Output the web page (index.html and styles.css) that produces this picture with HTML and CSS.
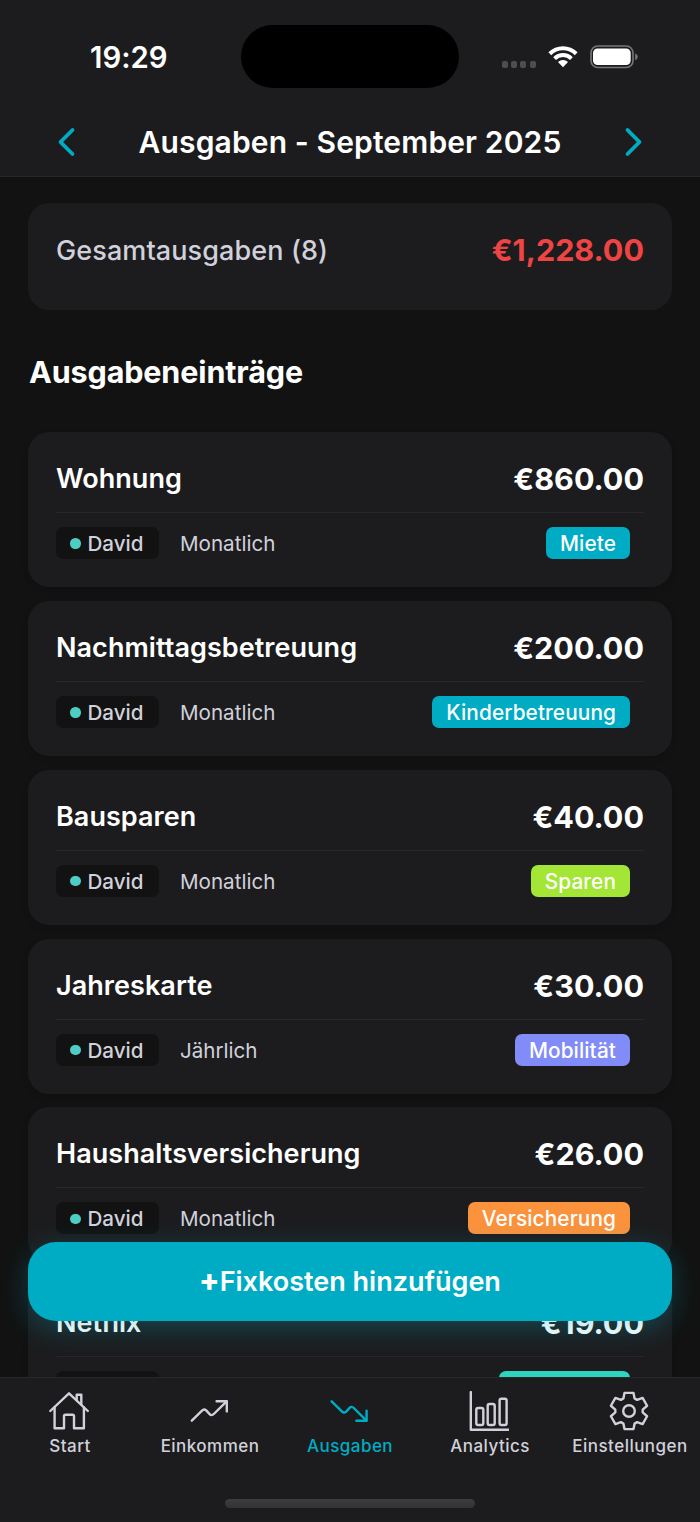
FILE: index.html
```html
<!DOCTYPE html>
<html lang="de">
<head>
	<meta charset="UTF-8">
	<title>Ausgaben</title>
	<link rel="stylesheet" href="styles.css">
</head>
<body>
	<div class="app">
		<header class="header">
			<div class="status">
				<div class="time">19:29</div>
				<div class="island"></div>
				<div class="signals">
					<div class="dots"><i></i><i></i><i></i><i></i></div>
					<svg class="wifi" width="30" height="22" viewBox="0 0 30 22">
						<path d="M0.4 6.3 A20.6 20.6 0 0 1 29.6 6.3 L26.8 9.2 A16.7 16.7 0 0 0 3.2 9.2 Z"/>
						<path d="M5.2 11.2 A13.8 13.8 0 0 1 24.8 11.2 L22 14 A9.9 9.9 0 0 0 8 14 Z"/>
						<path d="M10 16 A7.1 7.1 0 0 1 20 16 L15 21.3 Z"/>
					</svg>
					<svg class="battery" width="48" height="24" viewBox="0 0 48 24">
						<rect class="shell" x="1" y="1" width="42" height="21.5" rx="6.8"/>
						<rect x="3" y="3.4" width="37.7" height="16.6" rx="4.6"/>
						<path class="cap" d="M45.2 8.2 Q47.8 9.3 47.8 11.7 T45.2 15.2 Z"/>
					</svg>
				</div>
			</div>
			<div class="nav">
				<svg class="arrow" width="24" height="32" viewBox="0 0 24 32"><path d="M18.5 4 6.5 16 18.5 28"/></svg>
				<h1>Ausgaben - September 2025</h1>
				<svg class="arrow" width="24" height="32" viewBox="0 0 24 32"><path d="M5.5 4 17.5 16 5.5 28"/></svg>
			</div>
		</header>

		<main class="content">
			<section class="summary">
				<span class="summary-label">Gesamtausgaben (8)</span>
				<span class="amount red">€1,228.00</span>
			</section>
			<h2>Ausgabeneinträge</h2>
			<ul class="list">
				<li class="card">
					<div class="card-top"><span class="name">Wohnung</span><span class="amount">€860.00</span></div>
					<div class="card-bottom">
						<span class="person">David</span><span class="cycle">Monatlich</span><span class="tag">Miete</span>
					</div>
				</li>
				<li class="card">
					<div class="card-top"><span class="name">Nachmittagsbetreuung</span><span class="amount">€200.00</span></div>
					<div class="card-bottom">
						<span class="person">David</span><span class="cycle">Monatlich</span><span class="tag">Kinderbetreuung</span>
					</div>
				</li>
				<li class="card">
					<div class="card-top"><span class="name">Bausparen</span><span class="amount">€40.00</span></div>
					<div class="card-bottom">
						<span class="person">David</span><span class="cycle">Monatlich</span><span class="tag green">Sparen</span>
					</div>
				</li>
				<li class="card">
					<div class="card-top"><span class="name">Jahreskarte</span><span class="amount">€30.00</span></div>
					<div class="card-bottom">
						<span class="person">David</span><span class="cycle">Jährlich</span><span class="tag violet">Mobilität</span>
					</div>
				</li>
				<li class="card">
					<div class="card-top"><span class="name">Haushaltsversicherung</span><span class="amount">€26.00</span></div>
					<div class="card-bottom">
						<span class="person">David</span><span class="cycle">Monatlich</span><span class="tag orange">Versicherung</span>
					</div>
				</li>
				<li class="card">
					<div class="card-top"><span class="name">Netflix</span><span class="amount">€19.00</span></div>
					<div class="card-bottom">
						<span class="person"></span><span class="tag mint"></span>
					</div>
				</li>
			</ul>
			<button class="add-btn"><b>+</b>Fixkosten hinzufügen</button>
		</main>

		<footer class="tabbar">
			<nav class="tabs">
				<a class="tab">
					<svg width="40" height="40" viewBox="0 0 40 40">
						<path d="M1.3 20 20 2.3 38.8 20"/>
						<path d="M5.6 16.5V37.2H15V25.2Q15 23.7 16.5 23.7H23.5Q25 23.7 25 25.2V37.2H34.9V16.5"/>
						<path d="M27.7 9V3.7H32.3V13.5"/>
					</svg>
					<span>Start</span>
				</a>
				<a class="tab">
					<svg width="40" height="40" viewBox="0 0 40 40">
						<path d="M2.8 29.7 13 19.6Q15 17.4 17.2 19.4L20.6 23.1Q22.6 25.2 24.8 23L37.6 10.4"/>
						<path d="M27.6 10.3H37.8V20.4"/>
					</svg>
					<span>Einkommen</span>
				</a>
				<a class="tab active">
					<svg width="40" height="40" viewBox="0 0 40 40">
						<path d="M2.6 10.3 12.8 20.4Q15 22.6 17.2 20.6L20.6 16.9Q22.6 14.8 24.8 17L37.4 29.6"/>
						<path d="M37.6 19.7V29.7H27.4"/>
					</svg>
					<span>Ausgaben</span>
				</a>
				<a class="tab">
					<svg width="40" height="40" viewBox="0 0 40 40">
						<path d="M1.8 1V38.7H39.4"/>
						<rect x="7.3" y="17" width="7" height="17" rx="1.8"/>
						<rect x="18.7" y="13" width="7" height="21" rx="1.8"/>
						<rect x="30.6" y="7.8" width="7" height="26.2" rx="1.8"/>
					</svg>
					<span>Analytics</span>
				</a>
				<a class="tab">
					<svg width="40" height="40" viewBox="-20 -20 40 40">
						<path d="M-4.5-18.1H4.5L5.6-12.6 8.1-11.15 13.6-13.05 18.1-5.25 13.7-1.45V1.45L18.1 5.25 13.6 13.05 8.1 11.15 5.6 12.6 4.5 18.1H-4.5L-5.6 12.6-8.1 11.15-13.6 13.05-18.1 5.25-13.7 1.45V-1.45L-18.1-5.25-13.6-13.05-8.1-11.15-5.6-12.6Z"/>
						<circle r="5.8"/>
					</svg>
					<span>Einstellungen</span>
				</a>
			</nav>
			<div class="home-bar"></div>
		</footer>
	</div>
</body>
</html>
```

FILE: styles.css
```css
* {
	box-sizing: border-box;
}
body {
	margin: 0;
	background: #121212;
	color: #fff;
	font-family: Inter, "Liberation Sans", sans-serif;
	font-variant-ligatures: none;
}
h1,
h2,
ul {
	margin: 0;
	padding: 0;
}
.app {
	display: flex;
	flex-direction: column;
	width: 700px;
	height: 1522px;
	overflow: hidden;
}

/* header */
.header {
	height: 177px;
	background: #1c1c1e;
	border-bottom: 1px solid #28282a;
}
.status {
	display: grid;
	grid-template-columns: 241px 218px 241px;
	height: 107px;
	padding-top: 25px;
}
.time {
	padding-left: 90px;
	font-size: 29.3px;
	font-weight: 600;
	line-height: 65px;
}
.island {
	height: 63px;
	border-radius: 32px;
	background: #000;
}
.signals {
	display: flex;
	align-items: center;
	height: 63px;
	padding-left: 42.5px;
}
.dots {
	display: flex;
	gap: 3.3px;
	padding-top: 16px;
}
.dots i {
	width: 6.1px;
	height: 6.1px;
	border-radius: 2px;
	background: #4e4e50;
}
.wifi {
	margin-left: 12.3px;
	fill: #fff;
}
.battery {
	margin-left: 12.3px;
	fill: #fff;
}
.battery .shell {
	fill: none;
	stroke: #77777a;
	stroke-width: 1.6;
}
.battery .cap {
	fill: #77777a;
}
.nav {
	display: flex;
	justify-content: space-between;
	align-items: center;
	height: 70px;
	padding: 0 54px;
}
.nav h1 {
	font-size: 30px;
	font-weight: 600;
	letter-spacing: .13px;
	white-space: nowrap;
}
.arrow {
	fill: none;
	stroke: #00acc4;
	stroke-width: 3.8;
	stroke-linecap: round;
	stroke-linejoin: round;
}

/* content */
.content {
	position: relative;
	flex: 1;
	min-height: 0;
	padding: 26.4px 28px 0;
	overflow: hidden;
}
.summary {
	display: flex;
	justify-content: space-between;
	height: 107px;
	padding: 28px 28px 0;
	border-radius: 21px;
	background: #1c1c1e;
	line-height: 39px;
}
.summary-label {
	color: #d1d1db;
	font-size: 27px;
	font-weight: 500;
	letter-spacing: .1px;
}
.amount {
	font-size: 30.5px;
	font-weight: 700;
}
.red {
	color: #ef4444;
	line-height: 38px;
}
h2 {
	height: 121.6px;
	padding: 41px 0 0 1px;
	font-size: 30.5px;
	font-weight: 700;
	letter-spacing: -.12px;
	line-height: 41px;
}
.list {
	display: flex;
	flex-direction: column;
	gap: 13.87px;
	list-style: none;
}
.card {
	flex: none;
	height: 155px;
	padding: 28px;
	border-radius: 21px;
	background: #1c1c1e;
	box-shadow: 0 3px 7px rgba(0, 0, 0, .12);
}
.card-top {
	display: flex;
	justify-content: space-between;
	height: 53px;
	border-bottom: 1.5px solid #28282a;
	line-height: 38px;
}
.name {
	font-size: 27px;
	font-weight: 600;
	letter-spacing: .05px;
}
.card-bottom {
	display: flex;
	align-items: center;
	height: 32px;
	margin-top: 14px;
	padding-right: 14px;
	color: #d1d1db;
	font-size: 20.6px;
	line-height: 33px;
}
.person {
	display: flex;
	align-items: center;
	width: 103px;
	height: 32px;
	margin-right: 21px;
	padding: 1px 0 0 14px;
	border-radius: 7px;
	background: #121212;
	font-weight: 500;
}
.person::before {
	content: '';
	width: 10.5px;
	height: 10.5px;
	margin-right: 7px;
	border-radius: 50%;
	background: #4ecdc4;
}
.cycle {
	padding-top: 1px;
}
.tag {
	height: 32px;
	margin-left: auto;
	padding: 0 14px;
	border-radius: 7px;
	background: #00acc4;
	color: #fff;
	font-size: 20.8px;
	font-weight: 500;
	letter-spacing: .1px;
}
.green {
	background: #a3e635;
}
.violet {
	background: #818cf8;
}
.orange {
	background: #fb923c;
}
.mint {
	width: 131px;
	background: #2dd4bf;
}
.add-btn {
	position: absolute;
	left: 28px;
	right: 28px;
	bottom: 56px;
	height: 79px;
	padding: 0 0 2px;
	border: 0;
	border-radius: 28px;
	background: #00acc4;
	box-shadow: 0 7px 28px rgba(0, 172, 196, .3);
	color: #fff;
	font: 600 27px/77px Inter, "Liberation Sans", sans-serif;
}
.add-btn b {
	font-size: 30px;
	font-weight: 800;
}

/* tab bar */
.tabbar {
	height: 145px;
	background: #1c1c1e;
	border-top: 1px solid #28282a;
}
.tabs {
	display: grid;
	grid-template-columns: repeat(5, 140px);
	width: 699px;
	height: 121px;
	padding-top: 13px;
}
.tab {
	display: flex;
	flex-direction: column;
	align-items: center;
	color: #d1d1db;
	font-size: 17px;
	font-weight: 500;
	letter-spacing: .46px;
	line-height: 31px;
}
.tab svg {
	margin-right: 2px;
	fill: none;
	stroke: currentColor;
	stroke-width: 2.4;
	stroke-linecap: round;
	stroke-linejoin: round;
}
.active {
	color: #00acc4;
}
.home-bar {
	width: 250px;
	height: 9px;
	margin: 0 auto;
	border-radius: 5px;
	background: linear-gradient(#3c3c3c, #333);
}
```
